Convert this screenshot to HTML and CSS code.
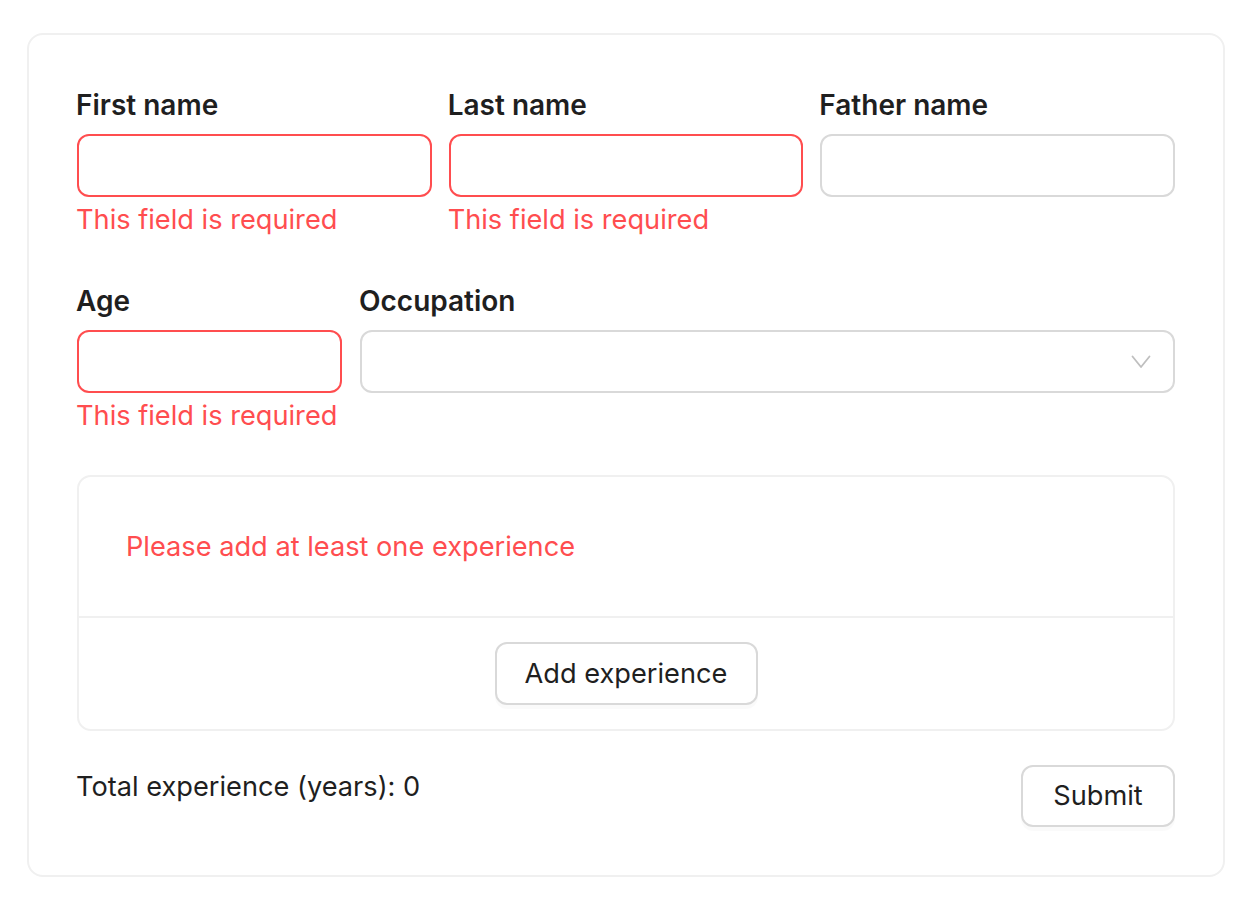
FILE: index.html
```html
<!DOCTYPE html>
<html lang="en">
<head>
<meta charset="utf-8">
<title>Form</title>
<link rel="stylesheet" href="styles.css">
</head>
<body>
<div class="page">
  <form class="card">
    <div class="row row-three">
      <div class="item">
        <label class="label">First name</label>
        <div class="input error"></div>
        <div class="explain">This field is required</div>
      </div>
      <div class="item">
        <label class="label">Last name</label>
        <div class="input error"></div>
        <div class="explain">This field is required</div>
      </div>
      <div class="item">
        <label class="label">Father name</label>
        <div class="input"></div>
      </div>
    </div>
    <div class="row row-two">
      <div class="item">
        <label class="label">Age</label>
        <div class="input error"></div>
        <div class="explain">This field is required</div>
      </div>
      <div class="item">
        <label class="label">Occupation</label>
        <div class="input select">
          <svg class="chevron" width="20" height="14" viewBox="0 0 20 14" fill="none"><path d="M1.5 1.5 L10 12 L18.5 1.5" stroke="#bfbfbf" stroke-width="1.8" stroke-linecap="round" stroke-linejoin="round"/></svg>
        </div>
      </div>
    </div>
    <div class="experience">
      <div class="exp-body">Please add at least one experience</div>
      <div class="exp-footer">
        <button type="button" class="btn btn-add">Add experience</button>
      </div>
    </div>
    <div class="bottom">
      <div class="total">Total experience (years): 0</div>
      <button type="button" class="btn btn-submit">Submit</button>
    </div>
  </form>
</div>
</body>
</html>
```

FILE: styles.css
```css
* { box-sizing: border-box; }
html, body { margin: 0; padding: 0; background: #ffffff; }
body {
  font-family: Inter, "Noto Sans", sans-serif;
  color: #1f1f1f;
  font-size: 27.2px;
  line-height: 44px;
}
.page {
  padding: 33px 0 0 27px;
}
.card {
  width: 1198px;
  border: 2px solid #f0f0f0;
  border-radius: 16px;
  padding: 48px 48px 48px 48px;
  background: #fff;
}
.row {
  display: grid;
  margin-bottom: 37px;
}
.row-three {
  grid-template-columns: 1fr 1fr 1fr;
  column-gap: 17px;
}
.row-two {
  grid-template-columns: 265px 1fr;
  column-gap: 18px;
}
.item {
  display: flex;
  flex-direction: column;
  min-width: 0;
}
.label {
  display: block;
  font-weight: 600;
  font-size: 28px;
  line-height: 44px;
  margin-bottom: 7px;
  margin-left: -1px;
  color: #1f1f1f;
  white-space: nowrap;
}
.input {
  height: 63px;
  border: 2px solid #d9d9d9;
  border-radius: 12px;
  background: #fff;
}
.input.error {
  border-color: #ff4d4f;
}
.explain {
  margin-top: 1px;
  margin-left: -1px;
  color: #ff4d4f;
  font-size: 27.2px;
  line-height: 44px;
  white-space: nowrap;
}
.select {
  display: flex;
  align-items: center;
  justify-content: flex-end;
  padding-right: 22px;
}
.chevron {
  display: block;
}
.experience {
  border: 2px solid #f0f0f0;
  border-radius: 14px;
}
.exp-body {
  padding: 48px 48px 47px 47px;
  color: #ff4d4f;
  font-size: 27.2px;
  line-height: 44px;
  white-space: nowrap;
}
.exp-footer {
  border-top: 2px solid #f0f0f0;
  padding: 24px;
  display: flex;
  justify-content: center;
}
.btn {
  font-family: Inter, "Noto Sans", sans-serif;
  font-size: 27.2px;
  line-height: 44px;
  color: #1f1f1f;
  background: #fff;
  border: 2px solid #d9d9d9;
  border-radius: 12px;
  box-shadow: 0 4px 0 rgba(0, 0, 0, 0.02);
  height: 63px;
  padding: 0;
  white-space: nowrap;
  cursor: pointer;
}
.btn-add {
  width: 263px;
}
.btn-submit {
  width: 154px;
  height: 62px;
}
.bottom {
  margin-top: 34px;
  display: flex;
  justify-content: space-between;
  align-items: flex-start;
}
.total {
  font-size: 27.2px;
  line-height: 44px;
  margin-left: -1px;
}
```
